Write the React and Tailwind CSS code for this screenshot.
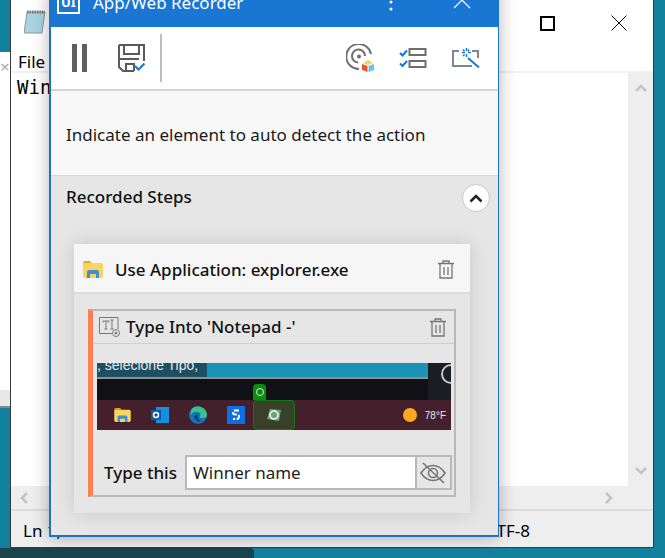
const uiFont = { fontFamily: '"Noto Sans", "Open Sans", sans-serif' };

function PauseIcon() {
  return (
    <svg width="16" height="28" viewBox="0 0 16 28" fill="#5f5f5f">
      <rect x="0" y="0" width="5" height="28" />
      <rect x="10" y="0" width="5" height="28" />
    </svg>
  );
}

function SaveIcon() {
  return (
    <svg width="28" height="28" viewBox="0 0 28 28" fill="none">
      <path d="M1 1H26V17M1 1V23L5 27H16" stroke="#5a5a5a" strokeWidth="2" />
      <path d="M6 1V10H21V1" stroke="#5a5a5a" strokeWidth="2" />
      <path d="M1 15H21M8 27V20H16V27" stroke="#5a5a5a" strokeWidth="2" />
      <path d="M17 22L20.5 25.5L26.5 19.5" stroke="#1976d2" strokeWidth="2" />
    </svg>
  );
}

function TargetIcon() {
  return (
    <svg width="28" height="28" viewBox="0 0 28 28" fill="none">
      <path d="M25 10A12.5 12.5 0 1 0 13 25" stroke="#6e6e6e" strokeWidth="2" />
      <path d="M19 12A6.5 6.5 0 1 0 12 18.5" stroke="#6e6e6e" strokeWidth="2" />
      <circle cx="13" cy="12.5" r="2" fill="#6e6e6e" />
      <path d="M17 19L22 16L27 19L22 21Z" fill="#f5d36b" />
      <path d="M16 20L21.5 22V28L16 26Z" fill="#e8562a" />
      <path d="M28 20L22.5 22V28L28 26Z" fill="#6ec1ea" />
    </svg>
  );
}

function ListIcon() {
  return (
    <svg width="28" height="20" viewBox="0 0 28 20" fill="none">
      <path d="M1 5L3.5 7.5L8 2.5M1 15.5L3.5 18L8 13" stroke="#1976d2" strokeWidth="2" />
      <rect x="10.5" y="1" width="16" height="6" stroke="#6e6e6e" strokeWidth="2" />
      <rect x="10.5" y="13" width="16" height="6" stroke="#6e6e6e" strokeWidth="2" />
    </svg>
  );
}

function MagicIcon() {
  return (
    <svg width="28" height="20" viewBox="0 0 28 20" fill="none">
      <path d="M7 3H1V18H20M20 3H26V10" stroke="#7d868c" strokeWidth="2" />
      <path d="M16 10L27 19.5" stroke="#1976d2" strokeWidth="2" />
      <path d="M14.5 0V3M14.5 6V9M10 4.5H13M16 4.5H19M11 1.5L12.5 3M17 1.5L16 3M11 8L12.5 6.5" stroke="#1976d2" strokeWidth="1.5" />
    </svg>
  );
}

function TrashIcon() {
  return (
    <svg width="16" height="19" viewBox="0 0 16 19" fill="none" stroke="#777" strokeWidth="1.3">
      <path d="M0 3.5H16M5 3.5V1H11V3.5M2 3.5V18H14V3.5M6 7V15M10 7V15" />
    </svg>
  );
}

function FolderIcon({ w = 20, h = 17 }) {
  return (
    <svg width={w} height={h} viewBox="0 0 20 17">
      <path d="M0 2Q0 0 2 0H7L9 2H0Z" fill="#e2a92c" />
      <path d="M0 2H18Q20 2 20 4V15Q20 17 18 17H2Q0 17 0 15Z" fill="#fbd35f" />
      <path d="M4 17V11Q4 9 6 9H14Q16 9 16 11V17H13V13H7V17Z" fill="#3f8fd6" />
    </svg>
  );
}

function TypeIntoIcon() {
  return (
    <svg width="22" height="21" viewBox="0 0 22 21" fill="none" stroke="#777" strokeWidth="1">
      <path d="M13 16.5H.5V.5H19V12" />
      <path d="M4 5.5V4H10V5.5M7 4V12M5.5 12H8.5" />
      <path d="M13 3V12M11.5 3H14.5M11.5 12H14.5" />
      <circle cx="17" cy="16" r="3.5" />
      <circle cx="17" cy="16" r="1" fill="#777" />
    </svg>
  );
}

function EyeSlashIcon() {
  return (
    <svg width="26" height="22" viewBox="0 0 26 22" fill="none" stroke="#777" strokeWidth="1.6">
      <path d="M1 11C5 5 9 3.5 13 3.5S21 5 25 11C21 17 17 18.5 13 18.5S5 17 1 11Z" />
      <circle cx="13" cy="11" r="4.5" />
      <path d="M3 1L24 21" />
    </svg>
  );
}

function TaskbarIcons() {
  return (
    <div className="flex h-full items-center pl-[17px]">
      <FolderIcon w={17} h={14} />
      <svg width="18" height="16" viewBox="0 0 18 16" className="ml-[20px]">
        <rect x="5" y="0" width="13" height="16" fill="#1490df" />
        <rect x="0" y="3" width="10" height="10" fill="#0a5aa8" />
        <circle cx="5" cy="8" r="2.5" fill="none" stroke="#fff" strokeWidth="1.5" />
      </svg>
      <svg width="18" height="18" viewBox="0 0 18 18" className="ml-[20px]">
        <circle cx="9" cy="9" r="9" fill="#1573b8" />
        <path d="M2 4A9 9 0 0 1 18 9Q18 12 14 12Q10 12 11 10Q13 7 9 6Q4 5 2 9Z" fill="#39c481" />
        <path d="M5 11Q7 8 9 9Q8 13 12 15Q8 17 5 11Z" fill="#0e3f78" />
      </svg>
      <svg width="18" height="18" viewBox="0 0 18 18" className="ml-[20px]">
        <rect width="18" height="18" fill="#0f6fe0" />
        <path d="M12 4.5H8Q6 4.5 6 6.5T8 8.5H10Q12 8.5 12 10.5T10 13H6" fill="none" stroke="#fff" strokeWidth="2" strokeDasharray="5 1.5" />
      </svg>
    </div>
  );
}

function Thumbnail() {
  return (
    <div className="relative flex h-[67px] w-[354px] flex-col overflow-hidden" style={{ fontFamily: '"Liberation Sans", sans-serif' }}>
      <div className="flex h-[14px] bg-[#1b93b5]">
        <div className="w-[110px] overflow-hidden whitespace-nowrap bg-[#1c4f63] text-[14px] leading-[4px] text-[#e8e8e8]">, selecione Tipo,</div>
      </div>
      <div className="h-[2px] bg-[#8f8f8f]" />
      <div className="h-[21px] bg-[#101114]" />
      <div className="flex min-h-0 flex-1 bg-[#43202c]">
        <TaskbarIcons />
        <div className="ml-auto flex items-center pr-[5px]">
          <div className="h-[14px] w-[14px] rounded-full bg-[#fda91e]" />
          <span className="ml-[8px] text-[10px] text-[#e6e6e6]">78°F</span>
        </div>
      </div>
      {/* right dark block */}
      <div className="absolute top-0 right-0 h-[37px] w-[23px] bg-[#1a1e22]">
        <div className="absolute top-[1px] left-[13px] h-[20px] w-[20px] rounded-full border-2 border-[#c6c6c6]" />
      </div>
      {/* selected element highlight */}
      <div className="absolute top-[37px] left-[156px] flex h-[30px] w-[42px] items-center justify-center rounded-sm border border-[#0f7a12] bg-[#38402a]">
        <svg width="16" height="16" viewBox="0 0 16 16">
          <path d="M4 2L15 3L13 14L1 12Z" fill="#6aa07c" />
          <circle cx="8" cy="8" r="4" fill="none" stroke="#d8ecd8" strokeWidth="2" />
        </svg>
      </div>
      <div className="absolute top-[21px] left-[156px] flex h-[16px] w-[13px] items-center justify-center rounded-t-sm bg-[#0c8a12]">
        <div className="h-[8px] w-[8px] rounded-full border border-[#d5ecd5]" />
      </div>
    </div>
  );
}

function RecorderWindow() {
  return (
    <div
      className="absolute top-[-13px] left-[49px] flex h-[550px] w-[450px] flex-col border-r border-b-2 border-l-2 border-[#1b74cc] bg-[#e6e6e6] shadow-[0_0_16px_rgba(0,0,0,0.3)]"
      style={uiFont}
    >
      <div className="flex h-[40px] shrink-0 items-end bg-[#1976d2] pb-[13px] pl-[6px] text-white">
        <div className="flex h-[24px] w-[23px] items-center justify-center border-2 border-white text-[13px] font-bold leading-none">UI</div>
        <span className="ml-[13px] text-[17px] leading-[22px]">App/Web Recorder</span>
        <div className="ml-auto flex items-center pr-[27px]">
          <svg width="4" height="16" viewBox="0 0 4 16" fill="#fff">
            <circle cx="2" cy="4" r="1.5" />
            <circle cx="2" cy="11" r="1.5" />
          </svg>
          <svg width="18" height="10" viewBox="0 0 18 10" fill="none" stroke="#fff" strokeWidth="1.2" className="mb-[4px] ml-[60px]">
            <path d="M1 9L9 1L17 9" />
          </svg>
        </div>
      </div>

      <div className="flex h-[64px] shrink-0 items-center border-b-2 border-[#d4d4d4] bg-white pl-[21px]">
        <PauseIcon />
        <div className="ml-[30px]"><SaveIcon /></div>
        <div className="ml-[14px] h-[48px] w-[2px] bg-[#bdbdbd]" />
        <div className="ml-auto flex items-center gap-[25px] pr-[18px]">
          <TargetIcon />
          <ListIcon />
          <MagicIcon />
        </div>
      </div>

      <div className="flex h-[85px] shrink-0 items-center border-b border-[#d8d8d8] bg-[#f8f8f8] pt-[4px] pl-[15px] text-[17px] text-[#1a1a1a]">
        Indicate an element to auto detect the action
      </div>

      <div className="flex h-[68px] shrink-0 items-start justify-between pt-[8px] pr-[8px] pl-[15px]">
        <span className="text-[17px] font-medium text-[#111]">Recorded Steps</span>
        <button type="button" className="flex h-[28px] w-[28px] items-center justify-center rounded-full border border-[#c8c8c8] bg-white">
          <svg width="14" height="9" viewBox="0 0 14 9" fill="none" stroke="#222" strokeWidth="2.5">
            <path d="M1.5 7.5L7 2L12.5 7.5" />
          </svg>
        </button>
      </div>

      <div className="ml-[23px] w-[396px] shadow-[0_0_18px_rgba(0,0,0,0.14)]">
        <div className="flex h-[50px] items-center justify-between border-b-2 border-[#dcdcdc] bg-[#f6f6f6] pt-[3px] pr-[16px] pl-[9px]">
          <div className="flex items-center">
            <FolderIcon />
            <span className="ml-[12px] text-[17px] font-medium text-[#111]">Use Application: explorer.exe</span>
          </div>
          <TrashIcon />
        </div>

        <div className="h-[219px] pt-[15px] pl-[14px]">
          <div className="h-[188px] w-[368px] border-2 border-l-[5px] border-[#b9b9b9] border-l-[#ff7f50]">
            <div className="flex h-[33px] items-center justify-between border-b border-[#d0d0d0] pr-[8px] pl-[6px]">
              <div className="flex items-center">
                <TypeIntoIcon />
                <span className="ml-[5px] text-[17px] font-medium text-[#111]">Type Into 'Notepad -'</span>
              </div>
              <TrashIcon />
            </div>
            <div className="mt-[19px] ml-[4px]">
              <Thumbnail />
            </div>
            <div className="mt-[25px] flex items-center pl-[11px]">
              <span className="text-[17px] font-medium text-[#111]">Type this</span>
              <div className="ml-[8px] flex h-[35px] w-[232px] items-center border-2 border-[#b9b9b9] bg-white pl-[6px] text-[17px] text-[#222]">
                Winner name
              </div>
              <div className="flex h-[35px] w-[35px] items-center justify-center border-2 border-l-0 border-[#b9b9b9] bg-[#e6e6e6]">
                <EyeSlashIcon />
              </div>
            </div>
          </div>
        </div>
      </div>
    </div>
  );
}

function NotepadWindow() {
  return (
    <div className="absolute top-0 left-[10px] flex h-[548px] w-[644px] flex-col border-x border-b border-[#3a3a3a] bg-white" style={{ fontFamily: '"Liberation Sans", sans-serif' }}>
      <div className="flex h-[52px] shrink-0 items-start">
        <svg width="22" height="24" viewBox="0 0 22 24" className="mt-[10px] ml-[13px]">
          <path d="M3 2H21L18 23H0Z" fill="#a9d4e0" stroke="#8a9aa0" />
          <path d="M3 2H21" stroke="#777" strokeWidth="3" strokeDasharray="1.5 1" />
        </svg>
        <div className="ml-auto flex items-center pt-[15px] pr-[26px]">
          <div className="h-[15px] w-[15px] border-2 border-black" />
          <svg width="16" height="16" viewBox="0 0 16 16" stroke="#000" strokeWidth="1" className="ml-[56px]">
            <path d="M.5 .5L15.5 15.5M15.5 .5L.5 15.5" />
          </svg>
        </div>
      </div>
      <div className="flex h-[21px] shrink-0 items-center border-b-2 border-[#f0f0f0] pl-[7px] text-[17px] text-black" style={uiFont}>File</div>
      <div className="flex min-h-0 flex-1">
        <div className="flex-1 pt-[2px] pl-[6px] text-[19px] leading-[24px] text-black" style={{ fontFamily: '"DejaVu Sans Mono", monospace' }}>Winner name</div>
        <div className="flex w-[25px] flex-col items-center justify-between bg-[#eeeeee] py-[11px]">
          <svg width="12" height="8" viewBox="0 0 12 8" fill="none" stroke="#c4c4c4" strokeWidth="2.5"><path d="M1 7L6 2L11 7" /></svg>
          <svg width="12" height="8" viewBox="0 0 12 8" fill="none" stroke="#c4c4c4" strokeWidth="2.5"><path d="M1 1L6 6L11 1" /></svg>
        </div>
      </div>
      <div className="flex h-[25px] shrink-0 items-center justify-between border-b-2 border-[#dcdcdc] bg-[#eeeeee] pr-[40px] pl-[9px]">
        <svg width="8" height="12" viewBox="0 0 8 12" fill="none" stroke="#c4c4c4" strokeWidth="2.5"><path d="M7 1L2 6L7 11" /></svg>
        <svg width="8" height="12" viewBox="0 0 8 12" fill="none" stroke="#c4c4c4" strokeWidth="2.5"><path d="M1 1L6 6L1 11" /></svg>
      </div>
      <div className="flex h-[36px] shrink-0 items-center bg-[#eeeeee] pt-[4px] pr-[123px] pl-[12px] text-[17px] text-black" style={uiFont}>
        <span>Ln 1, Col 12</span>
        <span className="ml-auto">UTF-8</span>
      </div>
    </div>
  );
}

export default function App() {
  return (
    <div className="relative h-[558px] w-[665px] overflow-hidden bg-[#14809f]">
      {/* window behind notepad */}
      <div className="absolute top-[52px] left-0 flex h-[356px] w-[11px] flex-col bg-white">
        <div className="mt-[6px] text-[17px] leading-none text-[#aaa]">×</div>
        <div className="mt-auto h-[18px] border-b-2 border-[#888] bg-[#e8e8e8]" />
      </div>
      {/* taskbar strip */}
      <div className="absolute bottom-0 left-0 h-[10px] w-[254px] rounded-tr-sm bg-[#1a4450]" />
      <NotepadWindow />
      <RecorderWindow />
    </div>
  );
}
